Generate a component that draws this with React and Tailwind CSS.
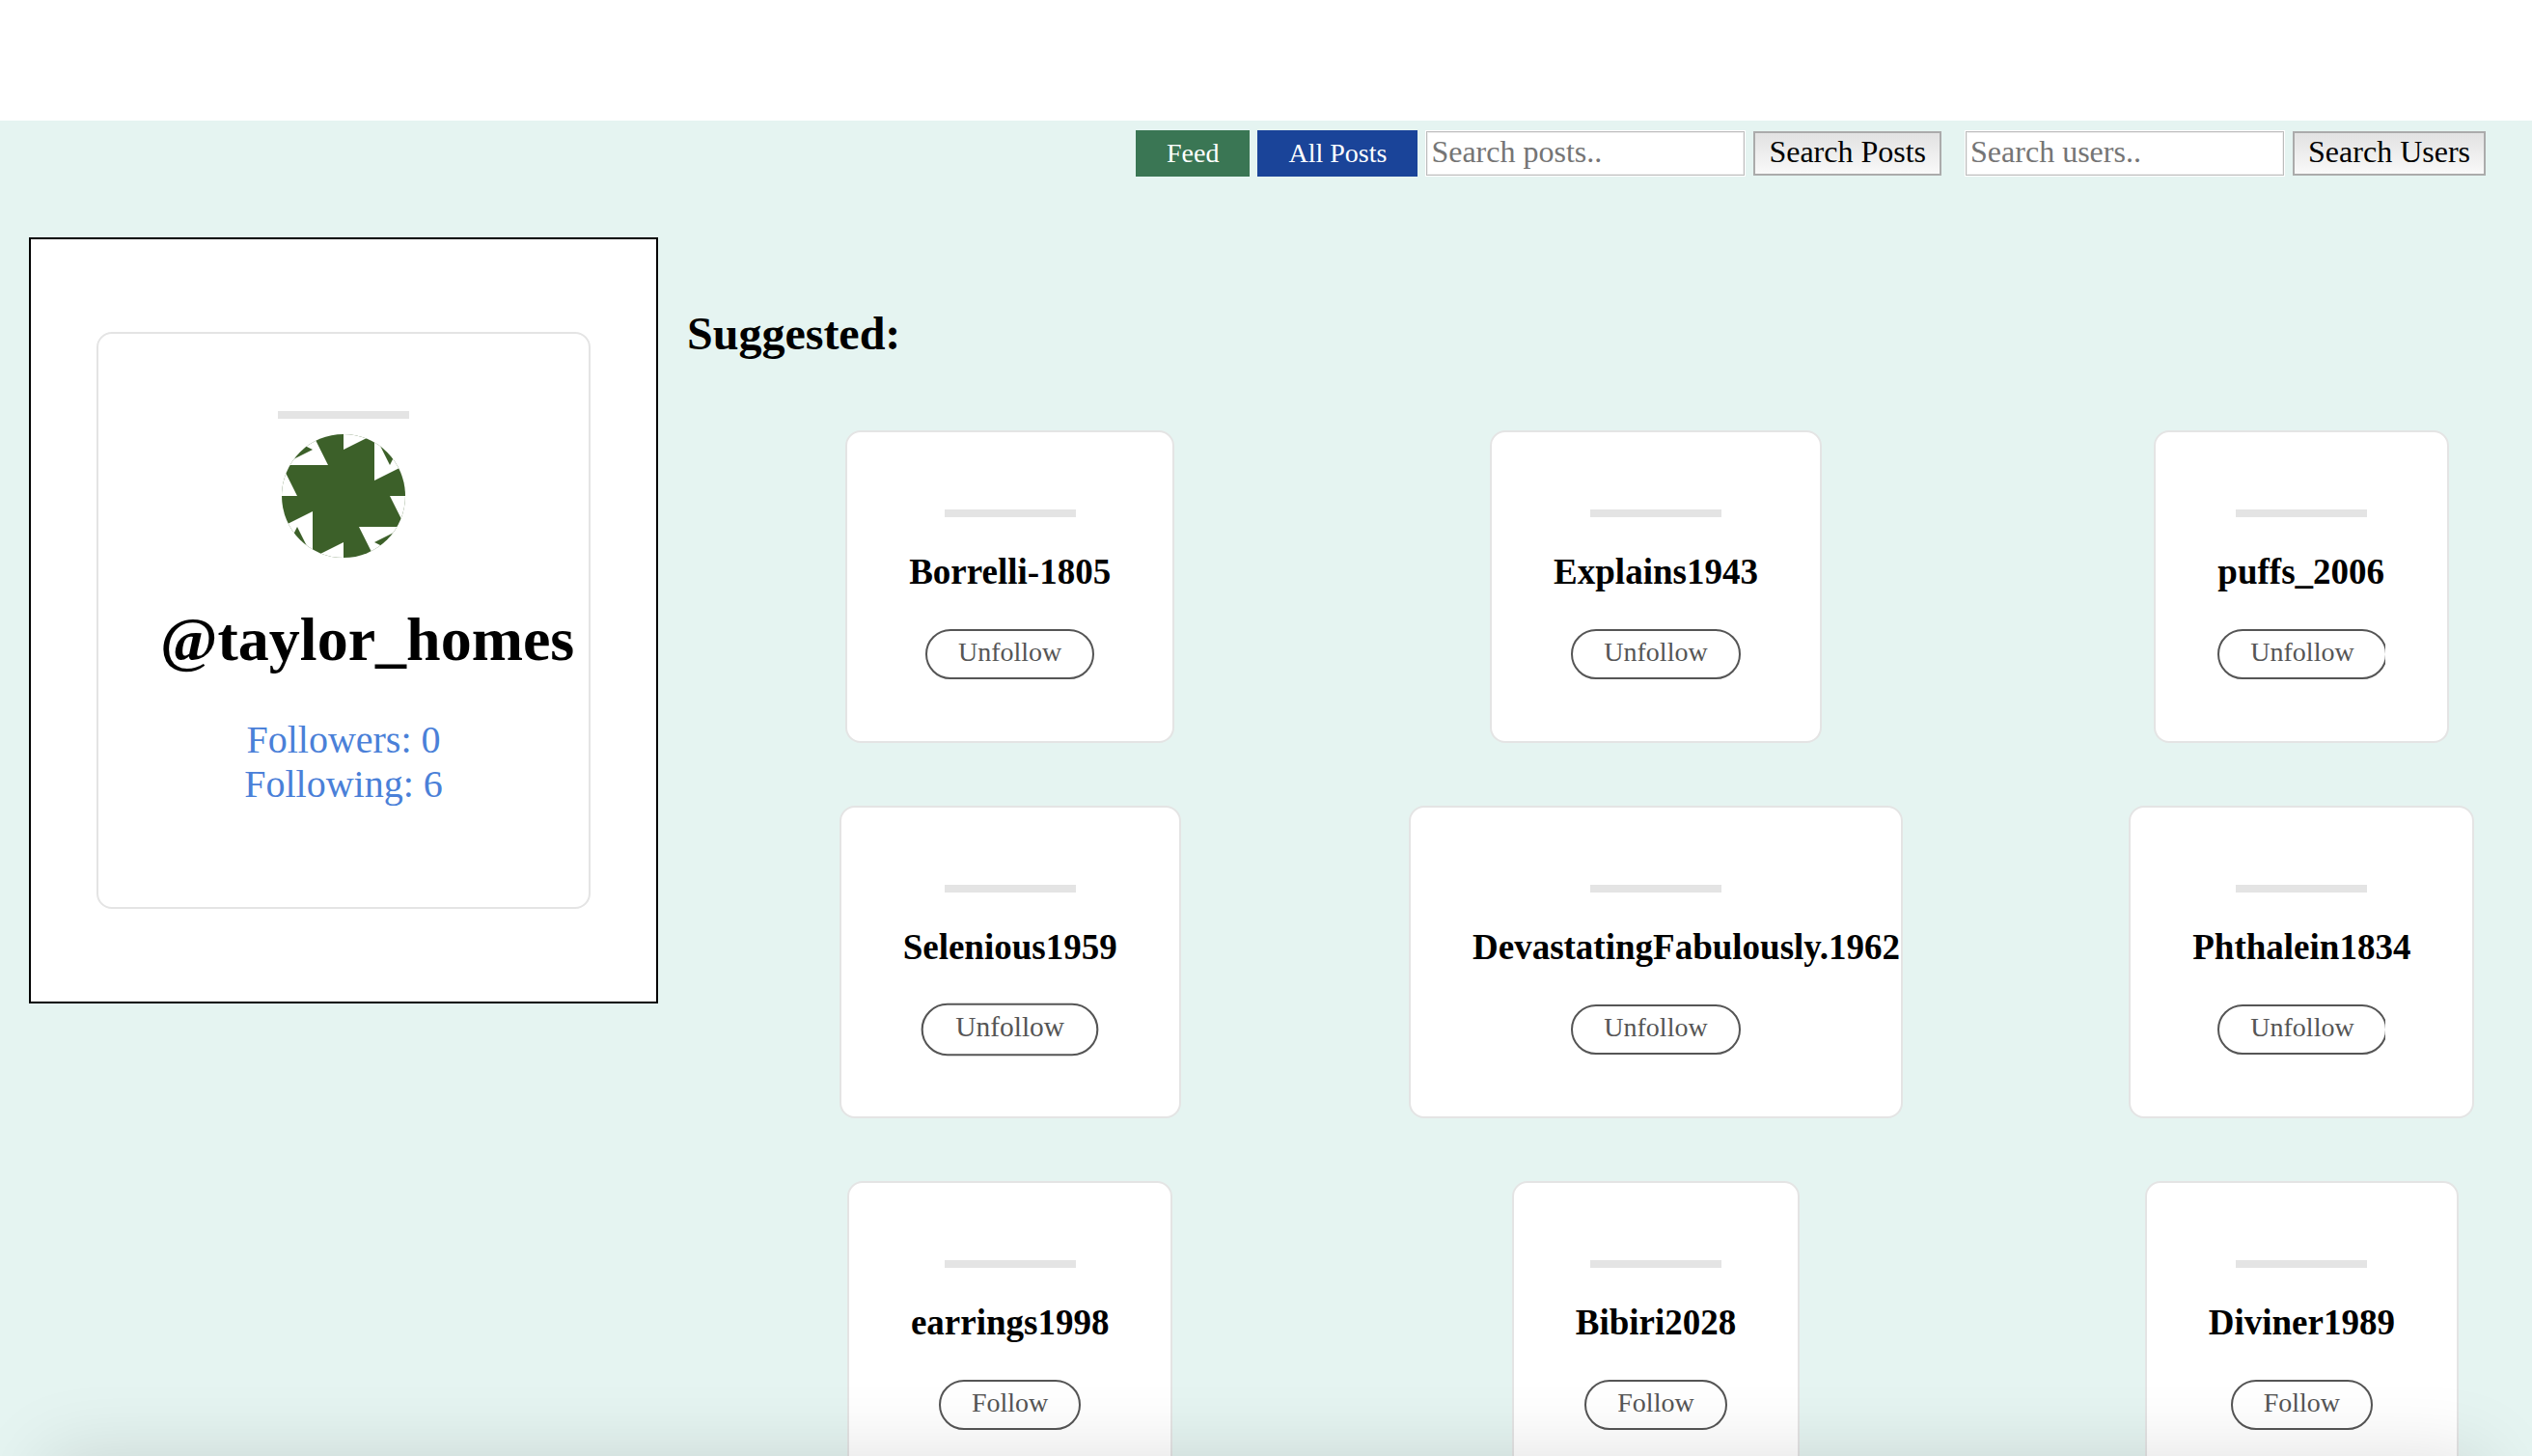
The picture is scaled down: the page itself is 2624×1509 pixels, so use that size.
const SUGGESTED = [
  { name: 'Borrelli-1805', following: true },
  { name: 'Explains1943', following: true },
  { name: 'puffs_2006', following: true, clipped: true },
  { name: 'Selenious1959', following: true, active: true },
  { name: 'DevastatingFabulously.1962', following: true },
  { name: 'Phthalein1834', following: true, clipped: true },
  { name: 'earrings1998', following: false },
  { name: 'Bibiri2028', following: false },
  { name: 'Diviner1989', following: false },
];

function Avatar() {
  return (
    <svg
      viewBox="0 0 128 128"
      className="mt-4 size-32 shrink-0 rounded-full"
      role="img"
      aria-label="taylor_homes avatar"
    >
      <rect width="128" height="128" fill="#3c6029" />
      {[0, 90, 180, 270].map((angle) => (
        <path
          key={angle}
          transform={`rotate(${angle} 64 64)`}
          fill="#ffffff"
          d="M64 0V16L96 0ZM96 0L112 32L128 0V32L96 48Z"
        />
      ))}
    </svg>
  );
}

function Bar() {
  return <div className="mt-4 h-2 w-[136px] shrink-0 bg-[#e4e4e4]" />;
}

function SearchForm({ label }) {
  const what = label.toLowerCase();
  return (
    <form className="flex items-center gap-2" onSubmit={(e) => e.preventDefault()}>
      <input
        type="text"
        aria-label={label}
        placeholder={`${what.charAt(0).toUpperCase()}${what.slice(1)}..`}
        className="h-12 w-[332px] border border-white bg-white px-[5px] pb-1 text-[32px] shadow-[inset_0_0_0_1px_#bcbcbc,inset_0_0_0_2px_#f0f0f0] outline-none placeholder:text-[#757575]"
      />
      <button
        type="submit"
        className="h-[46px] border-2 border-[#ababab] bg-linear-to-b from-[#e2e2e2] to-[#f9f9f9] px-3.5 pb-1 text-[32px] leading-none whitespace-nowrap"
      >
        {label}
      </button>
    </form>
  );
}

function UserCard({ name, following, clipped, active }) {
  return (
    <article className="flex w-max max-w-[512px] flex-col items-center rounded-2xl border-2 border-[#e4e4e4] bg-white p-16">
      <Bar />
      <h3 className="mt-9 mb-[38px] w-full text-[37px] leading-[42px] font-bold">{name}</h3>
      <div className={clipped ? 'w-[174px] overflow-hidden' : ''}>
        <button
          type="button"
          className={
            'rounded-full border-2 border-[#555555] px-8 pt-1.5 pb-2.5 text-[28px] leading-8 text-[#555555]' +
            (active ? ' scale-105' : '')
          }
        >
          {following ? 'Unfollow' : 'Follow'}
        </button>
      </div>
    </article>
  );
}

export default function App() {
  return (
    <div className="min-h-screen overflow-x-hidden bg-[#e5f4f1] pb-16 font-['Liberation_Serif',serif] text-black">
      <header className="h-[125px] bg-white" />
      <nav className="flex items-center justify-end gap-2 pt-2.5 pr-12">
        <button
          type="button"
          className="h-12 bg-[#3a7654] px-8 text-[28px] leading-none text-white"
        >
          Feed
        </button>
        <button
          type="button"
          className="h-12 bg-[#1a4499] px-8 text-[28px] leading-none text-white"
        >
          All Posts
        </button>
        <div className="flex gap-6">
          <SearchForm label="Search Posts" />
          <SearchForm label="Search Users" />
        </div>
      </nav>

      <div className="flex items-start gap-[30px] pt-[63px] pl-[30px]">
        <aside className="w-[652px] shrink-0 border-2 border-black bg-white px-[68px] py-24">
          <div className="flex flex-col items-center rounded-2xl border-2 border-[#e4e4e4] p-16">
            <Bar />
            <Avatar />
            <h1 className="mt-12 mb-11 w-full text-[64px] leading-[74px] font-bold">
              @taylor_homes
            </h1>
            <div className="mb-10 flex flex-col items-center text-[40px] leading-[46px] text-[#4a80d8]">
              <a href="#followers">Followers: 0</a>
              <a href="#following">Following: 6</a>
            </div>
          </div>
        </aside>

        <main className="min-w-0 flex-1 pt-18">
          <h2 className="text-5xl leading-14 font-bold">Suggested:</h2>
          <div className="mt-18 grid grid-cols-3 justify-items-center gap-x-48 gap-y-[65px] pl-24">
            {SUGGESTED.map((user) => (
              <UserCard key={user.name} {...user} />
            ))}
          </div>
        </main>
      </div>

      <div className="pointer-events-none fixed inset-x-12 top-full h-40 shadow-[0_0_80px_rgba(0,0,0,0.13)]" />
    </div>
  );
}
